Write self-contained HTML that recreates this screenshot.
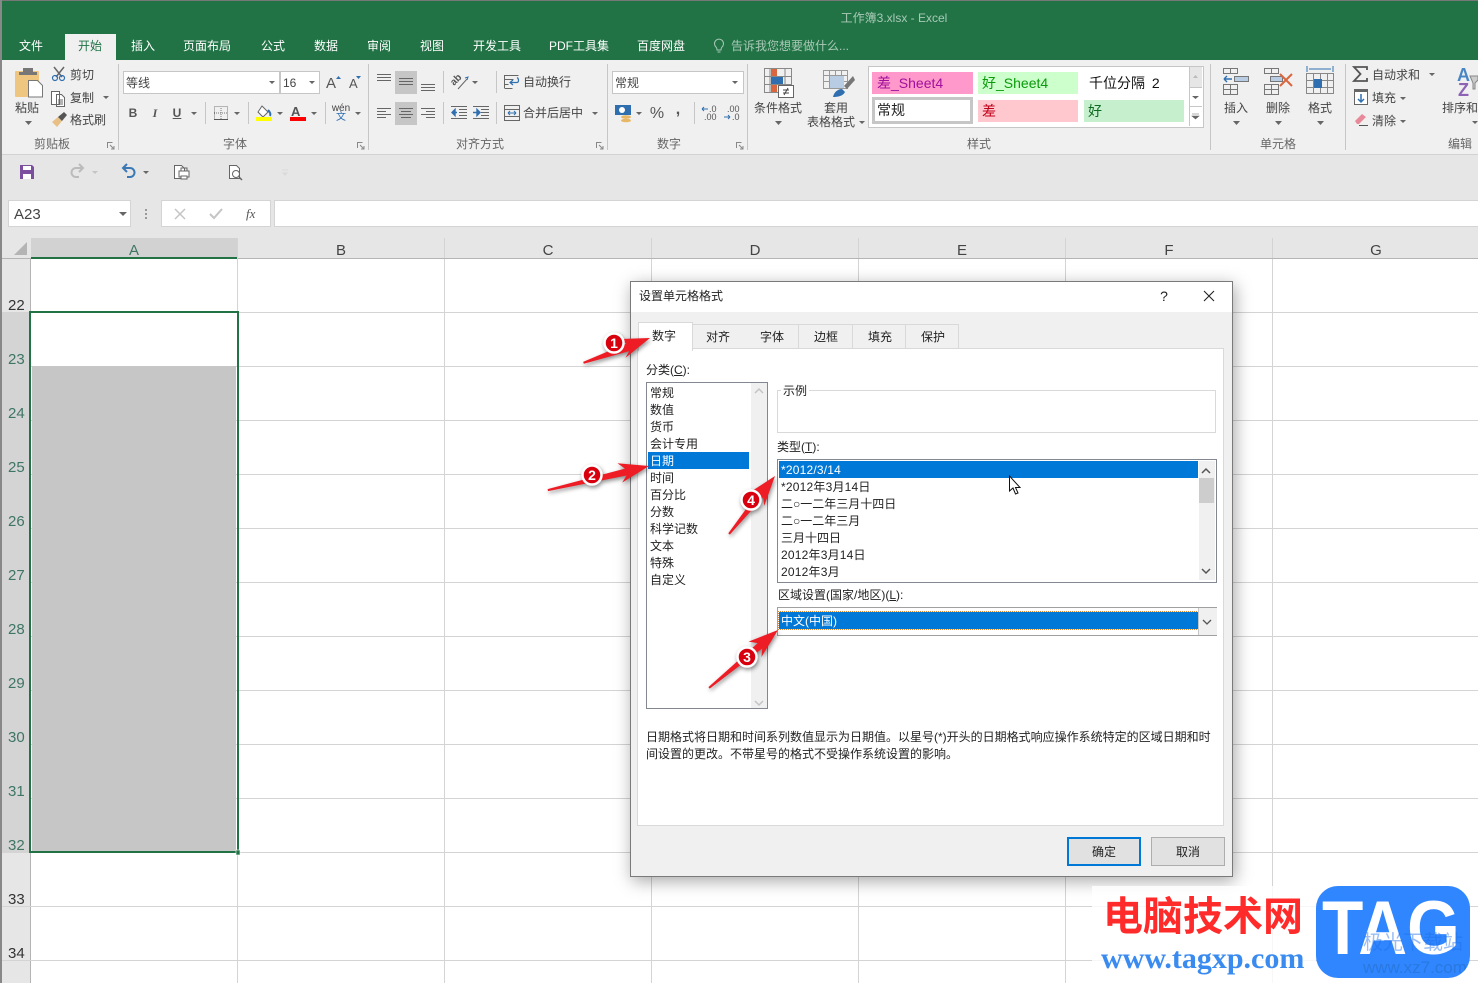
<!DOCTYPE html>
<html lang="zh-CN"><head><meta charset="utf-8"><title>工作簿3.xlsx - Excel</title>
<style>
html,body{margin:0;padding:0;width:1478px;height:983px;overflow:hidden;background:#fff}
body{position:relative;font:12px/18px "Liberation Sans","Noto Sans CJK SC",sans-serif;color:#444}
div,span,svg{position:absolute}
.t{white-space:nowrap;height:18px;line-height:18px}
.c{transform:translateX(-50%)}
.w{color:#fff}
.g{color:#555}
.h{background:#c6c6c6}
.ch{top:242px;font-size:15px;color:#444;transform:translateX(-50%)}
.rn{left:8px;font-size:15px;color:#333}
.rs{color:#3f7565}
.k{color:#222}
u{text-decoration:underline}
</style></head><body>

<!-- window frame / title -->
<div style="left:0;top:0;width:1478px;height:60px;background:#217346"></div>
<div style="left:0;top:0;width:1478px;height:1px;background:#777"></div>
<div class="t c" style="left:894px;top:9px;color:#a9c9b6">工作簿3.xlsx - Excel</div>
<div style="left:65px;top:34px;width:51px;height:26px;background:#f0f0f0"></div>
<div class="t c w" style="left:31px;top:37px">文件</div>
<div class="t c" style="left:90px;top:37px;color:#217346">开始</div>
<div class="t c w" style="left:143px;top:37px">插入</div>
<div class="t c w" style="left:207px;top:37px">页面布局</div>
<div class="t c w" style="left:273px;top:37px">公式</div>
<div class="t c w" style="left:326px;top:37px">数据</div>
<div class="t c w" style="left:379px;top:37px">审阅</div>
<div class="t c w" style="left:432px;top:37px">视图</div>
<div class="t c w" style="left:497px;top:37px">开发工具</div>
<div class="t c w" style="left:579px;top:37px">PDF工具集</div>
<div class="t c w" style="left:661px;top:37px">百度网盘</div>
<div class="t" style="left:731px;top:37px;color:#a9c9b6">告诉我您想要做什么...</div>

<!-- ribbon -->
<div style="left:0;top:60px;width:1478px;height:94px;background:#f0f0f0"></div>
<div style="left:0;top:154px;width:1478px;height:1px;background:#d2d2d2"></div>
<div style="left:0;top:155px;width:1478px;height:83px;background:#e6e6e6"></div>
<div style="left:0;top:0;width:2px;height:983px;background:#888"></div>

<div class="t c" style="left:27px;top:99px;color:#444">粘贴</div>
<div class="t" style="left:70px;top:66px">剪切</div>
<div class="t" style="left:70px;top:89px">复制</div>
<div class="t" style="left:70px;top:111px">格式刷</div>
<div style="left:123px;top:71px;width:155px;height:21px;background:#fff;border:1px solid #c6c6c6"></div>
<div style="left:280px;top:71px;width:38px;height:21px;background:#fff;border:1px solid #c6c6c6"></div>
<div class="t" style="left:126px;top:74px">等线</div>
<div class="t" style="left:283px;top:74px">16</div>
<div class="t c g" style="left:133px;top:104px;font-weight:bold">B</div>
<div class="t c g" style="left:155px;top:104px;font-style:italic;font-weight:bold;font-family:'Liberation Serif',serif">I</div>
<div class="t c g" style="left:177px;top:104px;font-weight:bold"><u>U</u></div>
<div class="t c" style="left:341px;top:100px;font-size:10px;color:#444">wén</div>
<div class="t c" style="left:341px;top:109px;font-size:10px;color:#2b6cb0">文</div>
<div class="t" style="left:523px;top:73px">自动换行</div>
<div class="t" style="left:523px;top:104px">合并后居中</div>
<div style="left:612px;top:71px;width:130px;height:21px;background:#fff;border:1px solid #c6c6c6"></div>
<div class="t" style="left:615px;top:74px">常规</div>
<div class="t c g" style="left:657px;top:105px;font-size:16px">%</div>
<div class="t c g" style="left:678px;top:101px;font-size:16px;font-weight:bold">,</div>
<div class="t c" style="left:778px;top:99px">条件格式</div>
<div class="t c" style="left:836px;top:99px">套用</div>
<div class="t c" style="left:831px;top:113px">表格格式</div>

<!-- styles gallery -->
<div style="left:868px;top:66px;width:334px;height:60px;background:#fff;border:1px solid #c6c6c6"></div>
<div class="t" style="left:872px;top:72px;width:96px;height:22px;line-height:22px;padding-left:5px;background:#ff99cc;color:#a0109a;font-size:14px">差_Sheet4</div>
<div class="t" style="left:978px;top:72px;width:96px;height:22px;line-height:22px;padding-left:4px;background:#ccffcc;color:#0a9a0a;font-size:14px">好_Sheet4</div>
<div class="t" style="left:1089px;top:72px;height:22px;line-height:22px;color:#111;font-size:14px;word-spacing:3px">千位分隔 2</div>
<div class="t" style="left:872px;top:97px;width:93px;height:21px;line-height:21px;padding-left:2px;background:#fff;border:3px solid #c6c6c6;color:#222;font-size:14px">常规</div>
<div class="t" style="left:978px;top:100px;width:96px;height:22px;line-height:22px;padding-left:4px;background:#ffc7ce;color:#c00018;font-size:14px">差</div>
<div class="t" style="left:1084px;top:100px;width:96px;height:22px;line-height:22px;padding-left:4px;background:#c6efce;color:#0c6a20;font-size:14px">好</div>

<div class="t c" style="left:1236px;top:99px">插入</div>
<div class="t c" style="left:1278px;top:99px">删除</div>
<div class="t c" style="left:1320px;top:99px">格式</div>
<div class="t" style="left:1372px;top:66px">自动求和</div>
<div class="t" style="left:1372px;top:89px">填充</div>
<div class="t" style="left:1372px;top:112px">清除</div>
<div class="t" style="left:1442px;top:99px">排序和</div>

<div class="t c" style="left:52px;top:135px;color:#666">剪贴板</div>
<div class="t c" style="left:235px;top:135px;color:#666">字体</div>
<div class="t c" style="left:480px;top:135px;color:#666">对齐方式</div>
<div class="t c" style="left:669px;top:135px;color:#666">数字</div>
<div class="t c" style="left:979px;top:135px;color:#666">样式</div>
<div class="t c" style="left:1278px;top:135px;color:#666">单元格</div>
<div class="t c" style="left:1460px;top:135px;color:#666">编辑</div>

<!-- ribbon icons -->
<svg style="left:0;top:0" width="1478" height="238" viewBox="0 0 1478 238" fill="none">
<!-- group separators -->
<g fill="#c6c6c6">
<rect x="118" y="64" width="1" height="86"/><rect x="368" y="64" width="1" height="86"/><rect x="607" y="64" width="1" height="86"/><rect x="747" y="64" width="1" height="86"/><rect x="1210" y="64" width="1" height="86"/><rect x="1345" y="64" width="1" height="86"/>
<rect x="205" y="102" width="1" height="22"/><rect x="248" y="102" width="1" height="22"/><rect x="325" y="102" width="1" height="22"/>
<rect x="443" y="71" width="1" height="22"/><rect x="443" y="102" width="1" height="22"/><rect x="496" y="71" width="1" height="22"/><rect x="496" y="102" width="1" height="22"/><rect x="694" y="102" width="1" height="22"/>
<rect x="395" y="71" width="22" height="23"/><rect x="395" y="102" width="22" height="23"/>
</g>
<!-- bulb -->
<path d="M716 47a4.500 4.500 0 1 1 6 0c-1 1-1 2-1 3h-4c0-1 0-2-1-3zM717.500 52h3" stroke="#a9c9b6"/>
<!-- paste -->
<rect x="15" y="71" width="24" height="26" rx="1" fill="#eec680"/>
<rect x="23" y="68" width="10" height="6" fill="#777"/><rect x="19" y="72" width="18" height="3" fill="#777"/>
<path d="M28.500 80.500h9l5 5v11.500h-14z" fill="#fff" stroke="#777"/>
<!-- scissors -->
<path d="M54 67l8 10M64 67l-8 10" stroke="#666" stroke-width="1.500"/>
<circle cx="55" cy="78" r="2.500" stroke="#2f6fb0" stroke-width="1.200"/><circle cx="62" cy="78" r="2.500" stroke="#2f6fb0" stroke-width="1.200"/>
<!-- copy -->
<path d="M51.500 91.500h8v13h-8zM56.500 94.500h5l3 3v9h-8z" fill="#fff" stroke="#666"/>
<path d="M58 100h5M58 102h5M58 104h5" stroke="#666"/>
<!-- format painter -->
<path d="M52 122l6-5 4 4-5 6z" fill="#e8bf84"/><path d="M58 117l6-5 3 3-5 6z" fill="#555"/>
<!-- drop arrows -->
<g fill="#666">
<path d="M25 121h7l-3.500 4zM103 96h6l-3 3zM269 81h6l-3 3zM309 81h6l-3 3zM191 112h6l-3 3zM234 112h6l-3 3zM277 112h6l-3 3zM311 112h6l-3 3zM355 112h6l-3 3zM472 81h6l-3 3zM592 112h6l-3 3zM732 81h6l-3 3zM636 112h6l-3 3zM775 121h7l-3.500 4zM859 121h6l-3 3zM1233 121h7l-3.500 4zM1275 121h7l-3.500 4zM1317 121h7l-3.500 4zM1429 73h6l-3 3zM1400 97h6l-3 3zM1400 120h6l-3 3zM1472 121h6l-3 3zM119 212h8l-4 4z"/>
</g>
<!-- launchers -->
<g stroke="#888"><path d="M107.500 148v-5.500h5M114 149l-4-4M114 146v3h-3M357.500 148v-5.500h5M364 149l-4-4M364 146v3h-3M596.500 148v-5.500h5M603 149l-4-4M603 146v3h-3M736.500 148v-5.500h5M743 149l-4-4M743 146v3h-3"/></g>
<!-- grow/shrink font -->
<text x="326" y="88" font-size="15" fill="#555" font-family="Liberation Sans">A</text>
<text x="349" y="88" font-size="13" fill="#555" font-family="Liberation Sans">A</text>
<path d="M336 79l2.500-3 2.500 3zM356 76l2.500 3 2.500-3z" fill="#2f6fb0"/>
<!-- border -->
<path d="M214.500 106.500h13v13h-13zM221 106v14M214 113h14" stroke="#777" stroke-dasharray="1 1"/>
<path d="M214 119.500h14" stroke="#555"/>
<!-- fill colour -->
<path d="M262 106l6 6-5 5-5-5z" fill="#fff" stroke="#666"/><path d="M268 110c2 2 3 4 2 6" stroke="#2f6fb0" stroke-width="2"/>
<rect x="256" y="117" width="16" height="4" fill="#ffff00"/>
<text x="291" y="116" font-size="13" font-weight="bold" fill="#555" font-family="Liberation Sans">A</text>
<rect x="290" y="117" width="16" height="4" fill="#f00"/>
<!-- alignment -->
<g stroke="#666">
<path d="M377 74.500h14M377 77.500h14M377 80.500h14"/>
<path d="M399 78.500h14M399 81.500h14M399 84.500h14"/>
<path d="M421 84.500h14M421 87.500h14M421 90.500h14"/>
<path d="M377 108.500h14M377 111.500h9M377 114.500h14M377 117.500h9"/>
<path d="M399 108.500h14M401 111.500h10M399 114.500h14M401 117.500h10"/>
<path d="M421 108.500h14M426 111.500h9M421 114.500h14M426 117.500h9"/>
<path d="M451 106.500h16M459 109.500h8M459 112.500h8M459 115.500h8M451 118.500h16M473 106.500h16M481 109.500h8M481 112.500h8M481 115.500h8M473 118.500h16"/>
<path d="M458 89l9-10"/><path d="M465 78l3-1-1 3" stroke="#2f6fb0"/>
</g>
<text transform="translate(454,86) rotate(-45)" font-size="10" font-weight="bold" fill="#555" font-family="Liberation Sans">ab</text>
<path d="M457 112.500h-5M452 112.500l3-3v6zM473 112.500h5M480 112.500l-3-3v6z" stroke="#2f6fb0" stroke-width="1.400" fill="#2f6fb0"/>
<!-- wrap / merge -->
<path d="M504.500 75.500h14M504.500 75v13M504.500 79.500h9M504.500 84.500h4M504.500 88.500h8" stroke="#666"/>
<path d="M510 82.500h7c2 0 2-4 0-5M513 80l-3 2.500 3 2.500" stroke="#2f6fb0" stroke-width="1.200"/>
<path d="M504.500 105.500h15v15h-15zM504.500 109.500h15M504.500 116.500h15" stroke="#666"/>
<path d="M508 113h8M508 113l2-2M508 113l2 2M516 113l-2-2M516 113l-2 2" stroke="#2f6fb0"/>
<!-- currency -->
<rect x="615" y="105" width="16" height="10" fill="#2f6fb0"/><circle cx="622" cy="110" r="3" fill="#fff"/>
<ellipse cx="626" cy="117" rx="5" ry="1.800" fill="#e8b765"/><ellipse cx="626" cy="120.500" rx="5" ry="1.800" fill="#e8b765"/>
<!-- decimals -->
<text x="709" y="112" font-size="9" fill="#555" font-family="Liberation Sans">.0</text><text x="704" y="120" font-size="9" fill="#555" font-family="Liberation Sans">.00</text>
<path d="M702 109h6M702 109l2-2M702 109l2 2" stroke="#2f6fb0"/>
<text x="727" y="112" font-size="9" fill="#555" font-family="Liberation Sans">.00</text><text x="732" y="120" font-size="9" fill="#555" font-family="Liberation Sans">.0</text>
<path d="M724 117h6M730 117l-2-2M730 117l-2 2" stroke="#2f6fb0"/>
<!-- conditional -->
<path d="M764.500 68.500h27v24h-27zM770 68v25M776 68v25M785 68v25M764 76.500h28M764 84.500h28" stroke="#888"/>
<rect x="771" y="69" width="6" height="7" fill="#d9663e"/><rect x="771" y="77" width="12" height="7" fill="#2f6fb0"/><rect x="771" y="85" width="6" height="7" fill="#d9663e"/>
<rect x="778.500" y="85.500" width="15" height="12" fill="#fff" stroke="#666"/>
<path d="M783 90h6M783 93h6M788 88l-4 7" stroke="#444"/>
<!-- table format -->
<path d="M823.500 70.500h24v18h-24zM823 75.500h25M823 81.500h25M829.500 70v18M835.500 70v18M841.500 70v18" stroke="#999"/>
<rect x="830" y="76" width="14" height="12" fill="#b8cce4"/>
<path d="M853 76l-9 10 3 3 8-9z" fill="#777"/><path d="M833 97c1-5 5-8 9-8l3 3c-2 4-7 5-12 5z" fill="#2f6fb0"/>
<!-- gallery scroll -->
<rect x="1189" y="67" width="13" height="20" fill="#e6e6e6"/>
<path d="M1189.500 67v59M1189 87.500h13M1189 106.500h13" stroke="#c6c6c6"/>
<path d="M1193 78l2.500-3 2.500 3z" fill="#bbb"/><path d="M1192 96h7l-3.500 3z" fill="#666"/><path d="M1192 114h7M1192 116h7l-3.500 3z" stroke="#666" stroke-width=".6" fill="#666"/>
<!-- insert cells -->
<path d="M1223.500 68.500h14v5h-14zM1230.500 68v6M1223.500 84.500h14v10h-14zM1230.500 84v11M1223 89.500h15" stroke="#777"/>
<rect x="1234.500" y="76.500" width="14" height="5" fill="#b8cce4" stroke="#777"/>
<path d="M1224 79h8M1224 79l3-3M1224 79l3 3" stroke="#2f6fb0" stroke-width="1.400"/>
<!-- delete cells -->
<path d="M1264.500 68.500h14v5h-14zM1271.500 68v6M1264.500 84.500h14v10h-14zM1271.500 84v11M1264 89.500h15" stroke="#777"/>
<rect x="1270.500" y="76.500" width="12" height="5" fill="#b8cce4" stroke="#777"/>
<path d="M1280 74l12 12M1292 74l-12 12" stroke="#d9663e" stroke-width="2"/>
<!-- format cells -->
<path d="M1306.500 73.500h27v20h-27zM1306 80.500h28M1306 87.500h28M1313.500 73v21M1320.500 73v21M1327.500 73v21" stroke="#888"/>
<rect x="1314" y="79" width="8" height="9" fill="#2f6fb0"/>
<path d="M1307 66v6M1333 66v6M1309 69h22" stroke="#2f6fb0"/>
<!-- sum -->
<path d="M1367 70v-3h-13l6.500 7-6.500 7h13v-3" stroke="#555" stroke-width="1.800"/>
<rect x="1354.500" y="89.500" width="13" height="15" fill="#fff" stroke="#666"/><rect x="1354" y="89" width="14" height="3" fill="#666"/>
<path d="M1361 94v8M1358 99l3 3 3-3" stroke="#2f6fb0" stroke-width="1.500"/>
<path d="M1355 121l7-7 4 3-7 7h-2z" fill="#e8899a"/><path d="M1359 125.500h9" stroke="#555"/>
<!-- sort -->
<text x="1457" y="81" font-size="18" font-weight="bold" fill="#4a86c5" font-family="Liberation Sans">A</text>
<text x="1458" y="96" font-size="18" font-weight="bold" fill="#8e63b5" font-family="Liberation Sans">Z</text>
<path d="M1470 76h8v4l-3 3v6h-2v-6z" fill="#ccc" stroke="#888"/>
<!-- QAT -->
<path d="M20 165h12l2 2v12h-14z" fill="#7b4ea0"/><rect x="23" y="166" width="8" height="4" fill="#fff"/><rect x="23" y="174" width="8" height="5" fill="#fff"/>
<path d="M83 168h-7a4.500 4.500 0 0 0 0 9h3M79 164l4 4-4 4" stroke="#bbb" stroke-width="2"/><path d="M92 171h6l-3 3z" fill="#c4c4c4"/>
<path d="M123 168h7a4.500 4.500 0 0 1 0 9h-3M127 164l-4 4 4 4" stroke="#3b78b4" stroke-width="2"/><path d="M143 171h6l-3 3z" fill="#666"/>
<path d="M174.500 165.500h7l3 3v10h-10z" fill="#fff" stroke="#666"/><rect x="179" y="171" width="10" height="6" fill="#fff" stroke="#666"/><rect x="181" y="168" width="6" height="3" stroke="#666"/><rect x="181" y="176" width="6" height="3" fill="#fff" stroke="#666"/>
<path d="M229.500 165.500h7l3 3v10h-10z" fill="#fff" stroke="#666"/><circle cx="236" cy="174" r="3.500" fill="#fff" stroke="#666"/><path d="M239 177l3 3" stroke="#666" stroke-width="1.500"/>
<path d="M282 170h6M283 173h4l-2 2z" stroke="#dadada" fill="#dadada"/>
<!-- formula bar -->
<rect x="8.500" y="200.500" width="122" height="26" fill="#fff" stroke="#d4d4d4"/>
<rect x="161.500" y="200.500" width="109" height="26" fill="#fff" stroke="#d4d4d4"/>
<rect x="274.500" y="200.500" width="1204" height="26" fill="#fff" stroke="#d4d4d4"/>
<path d="M145 209h2v2h-2zM145 213h2v2h-2zM145 217h2v2h-2z" fill="#999"/>
<path d="M175 209l10 10M185 209l-10 10" stroke="#c4c4c4" stroke-width="1.500"/>
<path d="M210 214l4 4 8-9" stroke="#c4c4c4" stroke-width="2"/>
<text x="246" y="218" font-size="13" font-style="italic" fill="#555" font-family="Liberation Serif">fx</text>
<text x="14" y="219" font-size="15" fill="#444" font-family="Liberation Sans">A23</text>
<path d="M119 212h8l-4 4z" fill="#666"/>
</svg>

<!-- sheet -->
<div style="left:2px;top:238px;width:1476px;height:21px;background:#e6e6e6"></div>
<div style="left:2px;top:259px;width:28px;height:724px;background:#e6e6e6"></div>
<div style="left:2px;top:312px;width:28px;height:540px;background:#d4d4d4"></div>
<div style="left:31px;top:238px;width:206px;height:19px;background:#d2d2d2"></div>
<div style="left:31px;top:257px;width:207px;height:2px;background:#217346"></div>
<svg style="left:0;top:238px" width="1478" height="745" viewBox="0 238 1478 745" fill="none">
<path d="M14 255l13-13v13z" fill="#b4b4b4"/>
<g fill="#d4d4d4">
<rect x="30" y="259" width="1" height="724" fill="#b4b4b4"/>
<rect x="237" y="238" width="1" height="745"/><rect x="444" y="238" width="1" height="745"/><rect x="651" y="238" width="1" height="745"/><rect x="858" y="238" width="1" height="745"/><rect x="1065" y="238" width="1" height="745"/><rect x="1272" y="238" width="1" height="745"/>
<rect x="2" y="312" width="1476" height="1"/><rect x="2" y="366" width="1476" height="1"/><rect x="2" y="420" width="1476" height="1"/><rect x="2" y="474" width="1476" height="1"/><rect x="2" y="528" width="1476" height="1"/><rect x="2" y="582" width="1476" height="1"/><rect x="2" y="636" width="1476" height="1"/><rect x="2" y="690" width="1476" height="1"/><rect x="2" y="744" width="1476" height="1"/><rect x="2" y="798" width="1476" height="1"/><rect x="2" y="852" width="1476" height="1"/><rect x="2" y="906" width="1476" height="1"/><rect x="2" y="960" width="1476" height="1"/>
</g>
<rect x="2" y="258" width="29" height="1" fill="#b4b4b4"/>
<rect x="238" y="258" width="1240" height="1" fill="#b4b4b4"/>
<!-- selection -->
<rect x="32" y="366" width="204" height="485" fill="#c6c6c6"/>
<rect x="30" y="312" width="208" height="540" stroke="#217346" stroke-width="2"/>
<rect x="236" y="850" width="4" height="5" fill="#217346" stroke="#fff" stroke-width=".6"/>
</svg>
<div class="t ch rs" style="left:134px">A</div>
<div class="t ch" style="left:341px">B</div>
<div class="t ch" style="left:548px">C</div>
<div class="t ch" style="left:755px">D</div>
<div class="t ch" style="left:962px">E</div>
<div class="t ch" style="left:1169px">F</div>
<div class="t ch" style="left:1376px">G</div>
<div class="t rn" style="top:297px">22</div>
<div class="t rn rs" style="top:351px">23</div>
<div class="t rn rs" style="top:405px">24</div>
<div class="t rn rs" style="top:459px">25</div>
<div class="t rn rs" style="top:513px">26</div>
<div class="t rn rs" style="top:567px">27</div>
<div class="t rn rs" style="top:621px">28</div>
<div class="t rn rs" style="top:675px">29</div>
<div class="t rn rs" style="top:729px">30</div>
<div class="t rn rs" style="top:783px">31</div>
<div class="t rn rs" style="top:837px">32</div>
<div class="t rn" style="top:891px">33</div>
<div class="t rn" style="top:945px">34</div>

<!-- dialog -->
<div style="left:630px;top:281px;width:601px;height:594px;background:#f0f0f0;border:1px solid #7a7a7a;box-shadow:2px 4px 16px rgba(0,0,0,.35)"></div>
<div style="left:631px;top:282px;width:601px;height:30px;background:#fff"></div>
<div class="t k" style="left:639px;top:287px">设置单元格格式</div>
<div class="t c k" style="left:1164px;top:287px;font-size:14px">?</div>
<svg style="left:1200px;top:288px" width="18" height="16" fill="none"><path d="M4 3l10 10M14 3l-10 10" stroke="#222" stroke-width="1.100"/></svg>

<!-- tabs -->
<div style="left:692px;top:324px;width:52px;height:25px;background:#f0f0f0;border:1px solid #d9d9d9;border-bottom:0"></div>
<div style="left:745px;top:324px;width:53px;height:25px;background:#f0f0f0;border:1px solid #d9d9d9;border-bottom:0;border-left:0"></div>
<div style="left:799px;top:324px;width:53px;height:25px;background:#f0f0f0;border:1px solid #d9d9d9;border-bottom:0;border-left:0"></div>
<div style="left:853px;top:324px;width:52px;height:25px;background:#f0f0f0;border:1px solid #d9d9d9;border-bottom:0;border-left:0"></div>
<div style="left:906px;top:324px;width:52px;height:25px;background:#f0f0f0;border:1px solid #d9d9d9;border-bottom:0;border-left:0"></div>
<div style="left:637px;top:348px;width:585px;height:476px;background:#fff;border:1px solid #d9d9d9"></div>
<div style="left:638px;top:322px;width:53px;height:28px;background:#fff;border:1px solid #d9d9d9;border-bottom:0"></div>
<div class="t c k" style="left:664px;top:327px">数字</div>
<div class="t c k" style="left:718px;top:328px">对齐</div>
<div class="t c k" style="left:772px;top:328px">字体</div>
<div class="t c k" style="left:826px;top:328px">边框</div>
<div class="t c k" style="left:880px;top:328px">填充</div>
<div class="t c k" style="left:933px;top:328px">保护</div>

<div class="t k" style="left:646px;top:361px">分类(<u>C</u>):</div>
<div style="left:646px;top:382px;width:120px;height:325px;background:#fff;border:1px solid #828790"></div>
<div style="left:751px;top:383px;width:16px;height:325px;background:#f0f0f0"></div>
<div style="left:648px;top:452px;width:101px;height:17px;background:#0078d7"></div>
<svg style="left:751px;top:383px" width="16" height="325" fill="none"><path d="M4 10l4-4 4 4M4 318l4 4 4-4" stroke="#c4c4c4" stroke-width="1.500"/></svg>
<div class="t k" style="left:650px;top:384px">常规</div>
<div class="t k" style="left:650px;top:401px">数值</div>
<div class="t k" style="left:650px;top:418px">货币</div>
<div class="t k" style="left:650px;top:435px">会计专用</div>
<div class="t w" style="left:650px;top:452px">日期</div>
<div class="t k" style="left:650px;top:469px">时间</div>
<div class="t k" style="left:650px;top:486px">百分比</div>
<div class="t k" style="left:650px;top:503px">分数</div>
<div class="t k" style="left:650px;top:520px">科学记数</div>
<div class="t k" style="left:650px;top:537px">文本</div>
<div class="t k" style="left:650px;top:554px">特殊</div>
<div class="t k" style="left:650px;top:571px">自定义</div>

<div style="left:777px;top:390px;width:437px;height:41px;border:1px solid #d9d9d9"></div>
<div class="t k" style="left:781px;top:382px;background:#fff;padding:0 2px">示例</div>

<div class="t k" style="left:777px;top:438px">类型(<u>T</u>):</div>
<div style="left:777px;top:459px;width:438px;height:122px;background:#fff;border:1px solid #828790"></div>
<div style="left:1199px;top:461px;width:16px;height:119px;background:#f0f0f0"></div>
<div style="left:1199px;top:478px;width:15px;height:25px;background:#cdcdcd"></div>
<div style="left:779px;top:461px;width:419px;height:17px;background:#0078d7"></div>
<svg style="left:1199px;top:461px" width="16" height="119" fill="none"><path d="M3 12l4-4 4 4M3 108l4 4 4-4" stroke="#555" stroke-width="1.500"/></svg>
<div class="t w" style="left:781px;top:461px;letter-spacing:.2px">*2012/3/14</div>
<div class="t k" style="left:781px;top:478px;letter-spacing:.2px">*2012年3月14日</div>
<div class="t k" style="left:781px;top:495px">二○一二年三月十四日</div>
<div class="t k" style="left:781px;top:512px">二○一二年三月</div>
<div class="t k" style="left:781px;top:529px">三月十四日</div>
<div class="t k" style="left:781px;top:546px;letter-spacing:.2px">2012年3月14日</div>
<div class="t k" style="left:781px;top:563px;letter-spacing:.2px">2012年3月</div>

<div class="t k" style="left:778px;top:586px">区域设置(国家/地区)(<u>L</u>):</div>
<div style="left:777px;top:607px;width:438px;height:27px;background:#fff;border:1px solid #a0a0a0"></div>
<div style="left:779px;top:612px;width:419px;height:17px;background:#0078d7;outline:1px dotted #d98a3a"></div>
<div style="left:1198px;top:608px;width:18px;height:27px;background:#f0f0f0;border-left:1px solid #c6c6c6"></div>
<svg style="left:1199px;top:608px" width="17" height="27" fill="none"><path d="M4 12l4 4 4-4" stroke="#555" stroke-width="1.300"/></svg>
<div class="t w" style="left:781px;top:612px">中文(中国)</div>

<div class="t k" style="left:646px;top:728px">日期格式将日期和时间系列数值显示为日期值。以星号(*)开头的日期格式响应操作系统特定的区域日期和时</div>
<div class="t k" style="left:646px;top:745px">间设置的更改。不带星号的格式不受操作系统设置的影响。</div>

<div style="left:1067px;top:837px;width:70px;height:25px;background:#e1e1e1;border:2px solid #0078d7"></div>
<div style="left:1151px;top:837px;width:72px;height:27px;background:#e1e1e1;border:1px solid #adadad"></div>
<div class="t c k" style="left:1104px;top:843px">确定</div>
<div class="t c k" style="left:1188px;top:843px">取消</div>

<!-- cursor -->
<svg style="left:1005px;top:472px" width="20" height="26" viewBox="1005 472 20 26"><path d="M1009.500 476v15l3.500-3 2.500 6 2.500-1-2.500-5.500h4.500z" fill="#fff" stroke="#111" stroke-width="1"/></svg>

<!-- red annotation arrows -->
<svg style="left:0;top:0;filter:drop-shadow(1px 2px 2px rgba(0,0,0,.45))" width="1478" height="983" viewBox="0 0 1478 983">
<g fill="#ee1c25">
<polygon transform="translate(650,338) rotate(-20.500)" points="0,0 -30,-10 -24,-3 -71,-1 -71,1 -24,5 -30,10"/>
<polygon transform="translate(649,466) rotate(-13.400)" points="0,0 -30,-10 -24,-3 -104,-1 -104,1 -24,4 -30,10"/>
<polygon transform="translate(778,630) rotate(-40)" points="0,0 -30,-10 -24,-3 -90,-1 -90,1 -24,4 -30,10"/>
<polygon transform="translate(775,476) rotate(-51.600)" points="0,0 -30,-10 -24,-3 -74,-1 -74,1 -24,4 -30,10"/>
</g>
<g fill="#d8000f" stroke="#fff" stroke-width="2.500">
<circle cx="614" cy="343" r="9.500"/><circle cx="592" cy="475" r="9.500"/><circle cx="747" cy="657" r="9.500"/><circle cx="751" cy="500" r="9.500"/>
</g>
<g fill="#fff" font-size="14" font-weight="bold" text-anchor="middle" font-family="Liberation Sans">
<text x="614" y="348">1</text><text x="592" y="480">2</text><text x="747" y="662">3</text><text x="751" y="505">4</text>
</g>
</svg>

<!-- watermark -->
<div style="left:1092px;top:886px;width:224px;height:97px;background:rgba(255,255,255,.8)"></div>
<div class="t" style="left:1103px;top:889px;height:48px;line-height:48px;font-size:40px;font-weight:bold;color:#ff2b2b;font-family:'Noto Sans CJK SC',sans-serif">电脑技术网</div>
<div class="t" style="left:1101px;top:942px;height:34px;line-height:34px;font-size:30px;font-weight:bold;color:#3a8bf0;font-family:'Liberation Serif',serif">www.tagxp.com</div>
<div style="left:1316px;top:886px;width:154px;height:92px;border-radius:22px;background:#2f86ff;overflow:hidden">
<div class="t" style="left:6px;top:-2px;height:90px;line-height:90px;font-size:76px;font-weight:bold;color:#fff;transform:scaleX(.89);transform-origin:0 0">TAG</div>
<div class="t" style="left:47px;top:48px;font-size:20px;color:rgba(30,110,230,.45)">极光下载站</div>
<div class="t" style="left:47px;top:73px;font-size:17px;color:#2a78e0">www.xz7.com</div>
</div>

</body></html>
